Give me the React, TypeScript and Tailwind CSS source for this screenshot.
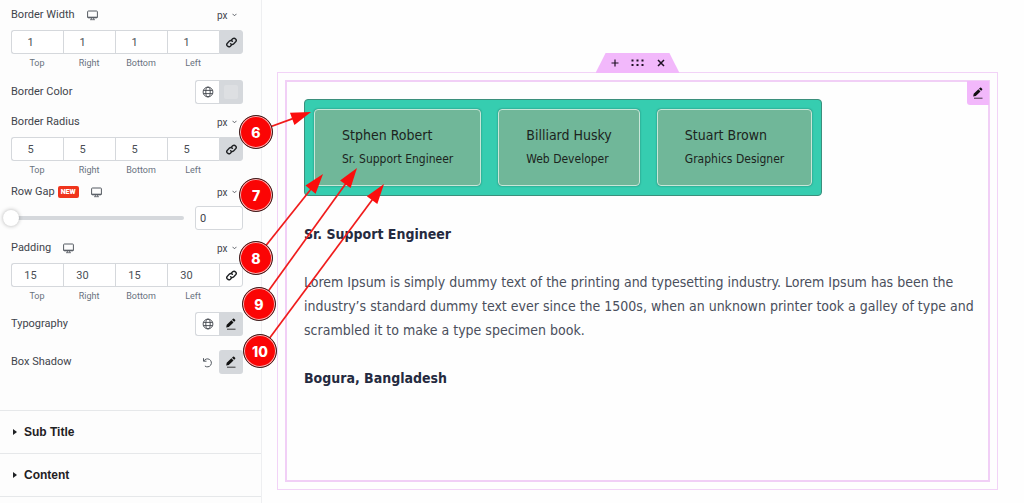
/**
 * Widget style editor: control sidebar on the left, canvas preview on the
 * right, and the numbered callouts that point from a control to its result.
 */

import { useState } from "react";
import type { ReactNode } from "react";

// ---------------------------------------------------------------------------
// Data
// ---------------------------------------------------------------------------

const SIDES = ["Top", "Right", "Bottom", "Left"];

const PEOPLE = [
  { name: "Stphen Robert", role: "Sr. Support Engineer" },
  { name: "Billiard Husky", role: "Web Developer" },
  { name: "Stuart Brown", role: "Graphics Designer" },
];

// Callout centres on the canvas, with the arrow tip where there is one
const CALLOUTS: { n: number; x: number; y: number; tip?: [number, number] }[] = [
  { n: 6, x: 256, y: 132, tip: [311, 112] },
  { n: 7, x: 256, y: 195 },
  { n: 8, x: 256, y: 258, tip: [323, 174] },
  { n: 9, x: 259, y: 304, tip: [357, 168] },
  { n: 10, x: 260, y: 351, tip: [384, 184] },
];

// ---------------------------------------------------------------------------
// Icons
// ---------------------------------------------------------------------------

function DesktopIcon() {
  return (
    <svg width="11" height="11" viewBox="0 0 11 11" fill="none" stroke="#555b62">
      <rect x="0.6" y="1" width="9.8" height="6.8" rx="0.8" />
      <path d="M0.6 7.3h9.8" strokeWidth="1.2" />
      <path d="M4.4 8v1.6M6.6 8v1.6M3 9.7h5" strokeWidth="0.8" />
    </svg>
  );
}

function LinkIcon() {
  return (
    <svg
      width="11"
      height="11"
      viewBox="0 0 24 24"
      fill="none"
      stroke="#1f2124"
      strokeWidth="3"
      strokeLinecap="round"
      strokeLinejoin="round"
    >
      <path d="M10 14.5a5 5 0 0 0 7 0l4-4a4.6 4.6 0 0 0-6.5-6.5l-2 2" />
      <path d="M14 9.5a5 5 0 0 0-7 0l-4 4a4.6 4.6 0 0 0 6.5 6.5l2-2" />
    </svg>
  );
}

function GlobeIcon() {
  return (
    <svg width="12" height="12" viewBox="0 0 12 12" fill="none" stroke="#3f444b" strokeWidth="0.9">
      <circle cx="6" cy="6" r="4.9" />
      <ellipse cx="6" cy="6" rx="2.2" ry="4.9" />
      <path d="M1.4 4.4h9.2M1.4 7.6h9.2" />
    </svg>
  );
}

function PencilIcon() {
  return (
    <svg width="12" height="12" viewBox="0 0 12 12" fill="#111">
      <path d="M1.2 9.4l0.5-2.6 4.7-4.5 2.1 2.1-4.7 4.5zM7 1.7l1-0.9a0.8 0.8 0 0 1 1.1 0l1 1a0.8 0.8 0 0 1 0 1.1l-1 0.9z" />
      <path d="M2 11.2h8.5" stroke="#111" strokeWidth="0.8" />
    </svg>
  );
}

function UndoIcon() {
  return (
    <svg width="11" height="11" viewBox="0 0 11 11" fill="none" stroke="#555b62">
      <path d="M1.5 1.2v3h3" />
      <path d="M1.8 4.1A4 4 0 1 1 2.9 9" />
    </svg>
  );
}

// ---------------------------------------------------------------------------
// Sidebar controls
// ---------------------------------------------------------------------------

function UnitSelect({ label }: { label: string }) {
  return (
    <span className="relative flex h-5 w-[26px] items-center">
      <select
        aria-label={`${label} unit`}
        className="w-full appearance-none bg-transparent text-[10px] text-[#3f444b] outline-none"
      >
        <option>px</option>
      </select>
      <svg
        className="pointer-events-none absolute right-1.5"
        width="5"
        height="4"
        viewBox="0 0 5 4"
        fill="none"
        stroke="#3f444b"
        strokeWidth="0.8"
      >
        <path d="M0.5 0.8l2 2 2-2" />
      </svg>
    </span>
  );
}

function ControlHeader({ label, children }: { label: string; children?: ReactNode }) {
  return (
    <div className="flex h-5 items-center">
      <span>{label}</span>
      {children}
      <span className="ml-auto">
        <UnitSelect label={label} />
      </span>
    </div>
  );
}

function Dimensions({
  label,
  values,
  linked = true,
  children,
}: {
  label: string;
  values: string[];
  linked?: boolean;
  children?: ReactNode;
}) {
  const [vals, setVals] = useState(values);

  return (
    <div>
      <ControlHeader label={label}>{children}</ControlHeader>
      <div className="mt-[5px] flex">
        {SIDES.map((side, i) => (
          <label key={side} className="flex flex-1 flex-col">
            <input
              value={vals[i]}
              onChange={(e) => setVals(vals.map((v, j) => (j === i ? e.target.value : v)))}
              className={`h-6 w-full border-y border-l border-[#d5d8dc] bg-white pr-3.5 text-center text-[11px] text-[#4a4f55] outline-none ${
                i === 0 ? "rounded-l-[3px]" : ""
              }`}
            />
            <span className="mt-px h-4 text-center text-[9px] leading-4 text-[#69727d]">{side}</span>
          </label>
        ))}
        <button
          aria-label={`Link ${label} values`}
          className={`flex h-6 w-6 items-center justify-center rounded-r-[3px] border border-[#d5d8dc] ${
            linked ? "bg-[#d5d8dc]" : "bg-white"
          }`}
        >
          <LinkIcon />
        </button>
      </div>
    </div>
  );
}

function GlobeButton({ label }: { label: string }) {
  return (
    <button
      aria-label={`${label} global setting`}
      className="flex h-6 w-6 items-center justify-center rounded-l-[3px] border border-r-0 border-[#d5d8dc] bg-white"
    >
      <GlobeIcon />
    </button>
  );
}

function EditButton({ label, rounded }: { label: string; rounded: string }) {
  return (
    <button
      aria-label={`Edit ${label}`}
      className={`flex h-6 w-6 items-center justify-center bg-[#d5d8dc] ${rounded}`}
    >
      <PencilIcon />
    </button>
  );
}

function Sidebar() {
  const [rowGap, setRowGap] = useState("0");

  return (
    <aside className="w-[262px] shrink-0 border-r border-[#eeeff1] bg-[#fdfdfd] font-['Roboto',sans-serif] text-[11px] text-[#3f444b]">
      <div className="flex flex-col pt-[5px] pr-[18px] pb-9 pl-[11px]">
        <Dimensions label="Border Width" values={["1", "1", "1", "1"]}>
          <span className="ml-3">
            <DesktopIcon />
          </span>
        </Dimensions>

        <div className="mt-[9px] flex h-6 items-center">
          <span>Border Color</span>
          <div className="ml-auto flex">
            <GlobeButton label="Border Color" />
            <button
              aria-label="Pick Border Color"
              className="flex h-6 w-6 items-center justify-center rounded-r-[3px] bg-[#d5d8dc]"
            >
              <span className="h-3.5 w-3.5 rounded-xs bg-[#dddfe2]" />
            </button>
          </div>
        </div>

        <div className="mt-2">
          <Dimensions label="Border Radius" values={["5", "5", "5", "5"]} />
        </div>

        <div className="mt-1">
          <ControlHeader label="Row Gap">
            <span className="ml-[3px] flex h-3 items-center rounded-xs bg-[#f0341c] px-[3px] text-[7px] font-black text-white">
              NEW
            </span>
            <span className="ml-3">
              <DesktopIcon />
            </span>
          </ControlHeader>
          <div className="mt-1 flex h-6 items-center">
            <input
              type="range"
              aria-label="Row Gap slider"
              value={rowGap}
              onChange={(e) => setRowGap(e.target.value)}
              className="-ml-2 h-4 min-w-0 flex-1 appearance-none bg-transparent [&::-webkit-slider-runnable-track]:h-1 [&::-webkit-slider-runnable-track]:rounded-xs [&::-webkit-slider-runnable-track]:bg-[#d5d8dc] [&::-webkit-slider-thumb]:-mt-1.5 [&::-webkit-slider-thumb]:h-4 [&::-webkit-slider-thumb]:w-4 [&::-webkit-slider-thumb]:appearance-none [&::-webkit-slider-thumb]:rounded-full [&::-webkit-slider-thumb]:bg-white [&::-webkit-slider-thumb]:shadow-[0_0_4px_rgba(0,0,0,0.3)]"
            />
            <input
              aria-label="Row Gap"
              value={rowGap}
              onChange={(e) => setRowGap(e.target.value)}
              className="ml-[11px] h-6 w-12 rounded-[3px] border border-[#d5d8dc] bg-white px-1 text-[11px] outline-none"
            />
          </div>
        </div>

        <div className="mt-2">
          <Dimensions label="Padding" values={["15", "30", "15", "30"]} linked={false}>
            <span className="ml-3">
              <DesktopIcon />
            </span>
          </Dimensions>
        </div>

        <div className="mt-2 flex h-6 items-center">
          <span>Typography</span>
          <div className="ml-auto flex">
            <GlobeButton label="Typography" />
            <EditButton label="Typography" rounded="rounded-r-[3px]" />
          </div>
        </div>

        <div className="mt-3.5 flex h-6 items-center">
          <span>Box Shadow</span>
          <div className="ml-auto flex items-center gap-1.5">
            <button aria-label="Reset Box Shadow">
              <UndoIcon />
            </button>
            <EditButton label="Box Shadow" rounded="rounded-[3px]" />
          </div>
        </div>
      </div>

      <div className="border-b border-[#e6e8ea]">
        {["Sub Title", "Content"].map((title) => (
          <button
            key={title}
            className="flex h-[43px] w-full items-center gap-[7px] border-t border-[#e6e8ea] pl-[13px] font-['Liberation_Sans',Arial,sans-serif] text-[12px] font-bold text-[#1f2124]"
          >
            <svg width="4" height="6" viewBox="0 0 4 6" fill="#1f2124">
              <path d="M0 0l4 3-4 3z" />
            </svg>
            {title}
          </button>
        ))}
      </div>
    </aside>
  );
}

// ---------------------------------------------------------------------------
// Canvas
// ---------------------------------------------------------------------------

function SectionHandle() {
  return (
    <div className="absolute bottom-full left-1/2 flex h-5 w-[84px] -translate-x-1/2 items-center justify-between bg-[#f2b8fb] px-3.5 [clip-path:polygon(12%_0,88%_0,100%_100%,0_100%)]">
      <button aria-label="Add">
        <svg width="10" height="10" viewBox="0 0 10 10" stroke="#1f1024" strokeWidth="1.2">
          <path d="M5 1.5v7M1.5 5h7" />
        </svg>
      </button>
      <button aria-label="Drag">
        <svg width="13" height="8" viewBox="0 0 13 8" fill="#1f1024">
          {[0.5, 5.5, 10.5].map((x) => (
            <g key={x}>
              <rect x={x} y="0.5" width="2" height="2" />
              <rect x={x} y="5" width="2" height="2" />
            </g>
          ))}
        </svg>
      </button>
      <button aria-label="Delete">
        <svg width="10" height="10" viewBox="0 0 10 10" stroke="#1f1024" strokeWidth="1.5">
          <path d="M2 2l6 6M8 2l-6 6" />
        </svg>
      </button>
    </div>
  );
}

function Preview() {
  return (
    <main className="flex min-w-0 flex-1 flex-col pt-[72px] pr-[26px] pb-[13px] pl-[15px] font-['DejaVu_Sans_Condensed',Tahoma,sans-serif] text-[14px] leading-6">
      <div className="relative flex flex-1 flex-col border border-[#f2d3f7] p-[7px]">
        <SectionHandle />
        <section className="relative flex-1 border-2 border-[#f1cff6] pt-[17px] pr-3 pl-[17px]">
          <button
            aria-label="Edit widget"
            className="absolute -top-px -right-px flex h-6 w-[22px] items-center justify-center rounded-bl-[3px] bg-[#f2b8fb]"
          >
            <PencilIcon />
          </button>

          <div className="flex w-fit gap-[17px] rounded-[4px] border border-[#3b8f7c] bg-[#36cdb0] p-[9px]">
            {PEOPLE.map((p) => (
              <button
                key={p.name}
                className="rounded-[4px] border border-[#c9e6d8] bg-[#70b799] px-[27px] pt-[13px] pb-3.5 text-left text-[#1c2420] shadow-[0_0_2px_rgba(0,0,0,0.4)]"
              >
                <span className="block">{p.name}</span>
                <span className="block text-[12px] leading-6">{p.role}</span>
              </button>
            ))}
          </div>

          <div className="mt-[26px] flex flex-col gap-6 text-[#4a4f5c]">
            <h3 className="font-bold text-[#252a40]">Sr. Support Engineer</h3>
            <p>
              Lorem Ipsum is simply dummy text of the printing and typesetting industry. Lorem Ipsum
              has been the industry’s standard dummy text ever since the 1500s, when an unknown
              printer took a galley of type and scrambled it to make a type specimen book.
            </p>
            <h3 className="font-bold text-[#252a40]">Bogura, Bangladesh</h3>
          </div>
        </section>
      </div>
    </main>
  );
}

// ---------------------------------------------------------------------------
// Callouts
// ---------------------------------------------------------------------------

function Callouts() {
  return (
    <div className="pointer-events-none absolute inset-0">
      <svg className="absolute inset-0 h-full w-full">
        {CALLOUTS.map(({ n, x, y, tip }) => {
          if (!tip) return null;
          const angle = (Math.atan2(tip[1] - y, tip[0] - x) * 180) / Math.PI;
          const length = Math.hypot(tip[0] - x, tip[1] - y);
          return (
            <g key={n} transform={`translate(${x} ${y}) rotate(${angle})`}>
              <path d={`M0 0H${length - 15}`} stroke="#f01c1c" strokeWidth="1.7" />
              <path d={`M${length} 0l-20 -6.5v13z`} fill="#fb0d0d" />
            </g>
          );
        })}
      </svg>
      {CALLOUTS.map(({ n, x, y }) => (
        <span
          key={n}
          className="absolute flex h-[34px] w-[34px] -translate-x-1/2 -translate-y-1/2 items-center justify-center rounded-full border border-[#3a2020] bg-[#fb0505] font-['Inter',sans-serif] text-[14px] font-extrabold text-white shadow-[inset_0_0_0_1px_#f5b5b5]"
          style={{ left: x, top: y }}
        >
          {n}
        </span>
      ))}
    </div>
  );
}

export default function App() {
  return (
    <div className="relative flex min-h-screen bg-[#fefefe]">
      <Sidebar />
      <Preview />
      <Callouts />
    </div>
  );
}
